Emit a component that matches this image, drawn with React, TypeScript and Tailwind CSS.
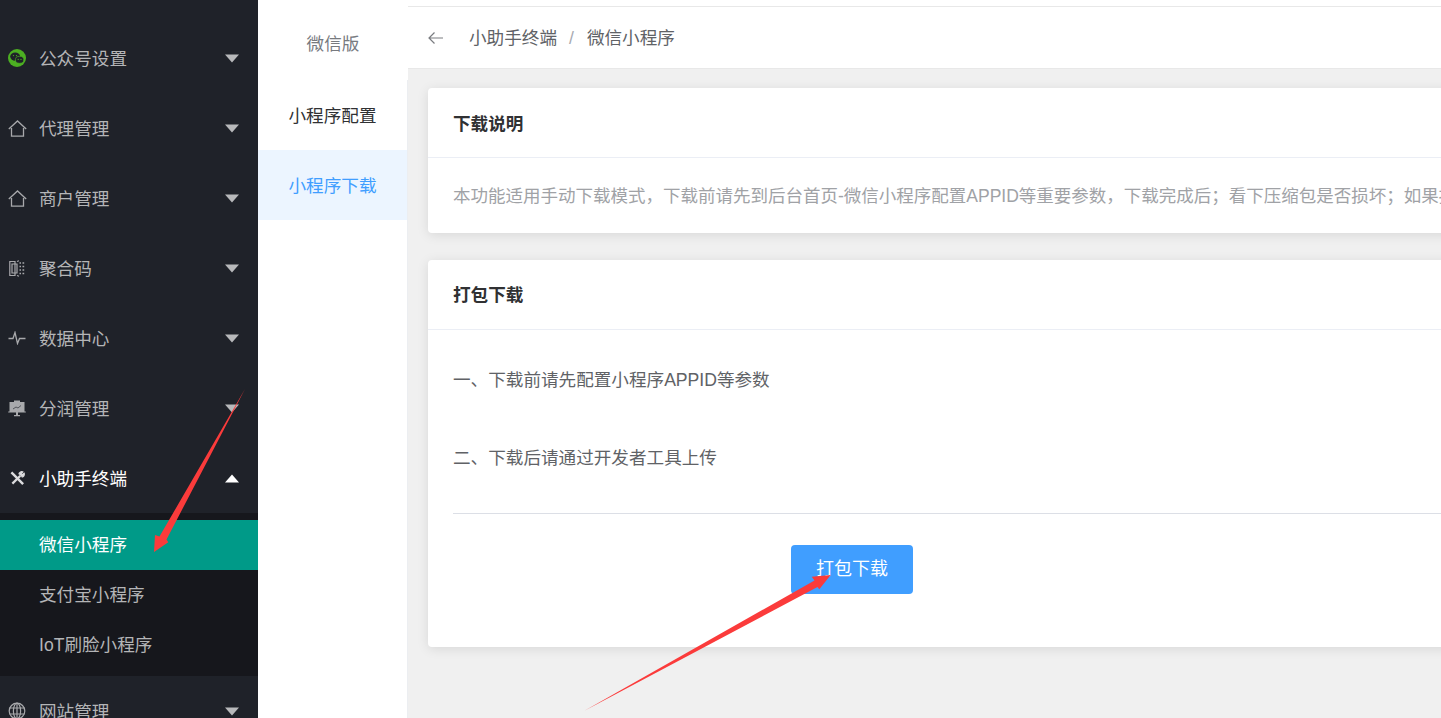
const font = { fontFamily: '"Liberation Sans", "Noto Sans CJK SC", sans-serif' };

function Chevron({ up, light }: { up?: boolean; light?: boolean }) {
  return (
    <svg width="16" height="9" viewBox="0 0 16 9" className="ml-auto mr-[18px]">
      <path d={up ? "M1 8.5 L8 0.5 L15 8.5 Z" : "M1 0.5 L15 0.5 L8 8.5 Z"} fill={light ? "#ffffff" : "#b8b9bb"} />
    </svg>
  );
}

function Icon({ kind }: { kind: string }) {
  const c = "#a8a9ac";
  switch (kind) {
    case "wechat":
      return (
        <svg width="18" height="18" viewBox="0 0 18 18">
          <circle cx="9" cy="9" r="9" fill="#4caf22" />
          <ellipse cx="7.2" cy="7.6" rx="5" ry="4.2" fill="#1f2229" />
          <ellipse cx="11.6" cy="10.8" rx="4.2" ry="3.5" fill="#1f2229" stroke="#4caf22" strokeWidth="0.7" />
          <circle cx="5.5" cy="6.6" r="0.7" fill="#4caf22" />
          <circle cx="8.5" cy="6.6" r="0.7" fill="#4caf22" />
          <circle cx="10.2" cy="10.4" r="0.6" fill="#4caf22" />
          <circle cx="13" cy="10.4" r="0.6" fill="#4caf22" />
        </svg>
      );
    case "home":
      return (
        <svg width="19" height="17" viewBox="0 0 19 17" fill="none" stroke={c} strokeWidth="1.3">
          <path d="M0.8 9 L9.5 1 L18.2 9 M3.5 8 V16.2 H15.5 V8" />
        </svg>
      );
    case "code":
      return (
        <svg width="16" height="17" viewBox="0 0 16 17" fill="none" stroke={c} strokeWidth="1.2">
          <path d="M0.8 1.5 H6 V15.5 H0.8 Z" />
          <path d="M3 4 H8 V13 H3 Z" />
          <path d="M8 1.5 L10 0.8 M8 15.5 L10 16.2" />
          <path d="M10.5 3 H12 M13.5 3 H15.2 M10.5 6.5 H12 M13.5 6.5 H15.2 M10.5 10 H12 M13.5 10 H15.2 M10.5 13.5 H12 M13.5 13.5 H15.2" strokeWidth="1.6" />
        </svg>
      );
    case "pulse":
      return (
        <svg width="18" height="14" viewBox="0 0 18 14" fill="none" stroke={c} strokeWidth="1.3">
          <path d="M0.5 7.5 H5 L7 1.5 L9.5 12.5 L11.5 7.5 H17.5" />
        </svg>
      );
    case "board":
      return (
        <svg width="18" height="17" viewBox="0 0 18 17">
          <path d="M6 0.5 H12 V2 H6 Z M1.5 2 H16.5 V11.5 H17.8 V12.5 H0.2 V11.5 H1.5 Z M8 12.5 H10 V15 H12 V16.2 H6 V15 H8 Z" fill={c} />
          <path d="M5 9 L8 7 L10 8 L13 5.5" stroke="#4a4c52" strokeWidth="0.9" fill="none" />
        </svg>
      );
    case "tools":
      return (
        <svg width="15" height="15" viewBox="0 0 16 16" fill="none" stroke="#dcdcde">
          <path d="M1.5 1.5 L5 5 M5 5 L14 14" strokeWidth="2.6" />
          <path d="M2.5 13.5 L11 5" strokeWidth="2.4" />
          <path d="M9.5 3.5 A3 3 0 0 1 13.5 1 L11.8 3 L13 4.2 L15 2.5 A3 3 0 0 1 12.5 6.5" strokeWidth="1.4" fill="#dcdcde" />
        </svg>
      );
    case "globe":
      return (
        <svg width="18" height="18" viewBox="0 0 18 18" fill="none" stroke={c} strokeWidth="1.2">
          <circle cx="9" cy="9" r="7.8" />
          <ellipse cx="9" cy="9" rx="3.6" ry="7.8" />
          <path d="M9 1 V17 M1.5 6 H16.5 M1.5 12 H16.5" />
        </svg>
      );
    default:
      return null;
  }
}

function NavRow({ icon, label, open }: { icon: string; label: string; open?: boolean }) {
  return (
    <div className={`flex h-[70px] shrink-0 items-center text-[17.6px] ${open ? "text-white" : "text-[#b4b5b7]"}`}>
      <span className="flex w-[39px] shrink-0 items-center justify-center pr-[5px]">
        <Icon kind={icon} />
      </span>
      <span className="pt-[2px]">{label}</span>
      <Chevron up={open} light={open} />
    </div>
  );
}

function Sidebar() {
  return (
    <aside className="flex h-full w-[258px] shrink-0 flex-col overflow-hidden bg-[#1f2229] pt-[23px]">
      <NavRow icon="wechat" label="公众号设置" />
      <NavRow icon="home" label="代理管理" />
      <NavRow icon="home" label="商户管理" />
      <NavRow icon="code" label="聚合码" />
      <NavRow icon="pulse" label="数据中心" />
      <NavRow icon="board" label="分润管理" />
      <NavRow icon="tools" label="小助手终端" open />
      <div className="shrink-0 bg-[#16171c] pb-[6px] pt-[7px] text-[17.6px] text-[#b4b5b7]">
        <div className="flex h-[50px] items-center bg-[#009a88] pl-[39px] text-white">微信小程序</div>
        <div className="flex h-[50px] items-center pl-[39px]">支付宝小程序</div>
        <div className="flex h-[50px] items-center pl-[39px]">IoT刷脸小程序</div>
      </div>
      <NavRow icon="globe" label="网站管理" />
    </aside>
  );
}

function SubNav() {
  return (
    <div className="flex h-full w-[150px] shrink-0 flex-col bg-white text-[17.6px]">
      <div className="flex h-[80px] shrink-0 items-center justify-center pt-[8px] text-[#777a7f]">微信版</div>
      <div className="flex flex-1 flex-col border-r border-[#eceef1]">
        <div className="flex h-[70px] items-center justify-center pt-[2px] text-[#303133]">小程序配置</div>
        <div className="flex h-[70px] items-center justify-center bg-[#ecf5ff] pt-[2px] text-[#409eff]">小程序下载</div>
      </div>
    </div>
  );
}

function Card({ title, className, titleClass, children }: { title: string; className: string; titleClass: string; children: React.ReactNode }) {
  return (
    <section className={`w-[1100px] shrink-0 rounded-[4px] bg-white shadow-[0_2px_12px_0_rgba(0,0,0,0.1)] ${className}`}>
      <div className={`flex h-[70px] items-center border-b border-[#ebeef5] pl-[25px] text-[17.6px] font-bold text-[#303133] ${titleClass}`}>
        {title}
      </div>
      {children}
    </section>
  );
}

function Main() {
  return (
    <main className="flex h-full min-w-0 flex-1 flex-col overflow-hidden bg-[#f0f0f0]">
      <div className="h-[7px] shrink-0 border-b border-[#e8e8e8] bg-white" />
      <div className="flex h-[62px] shrink-0 items-center border-b border-[#e8e8e8] bg-white text-[17.6px] text-[#606266]">
        <svg width="18" height="14" viewBox="0 0 18 14" fill="none" stroke="#7a7c80" strokeWidth="1.2" className="ml-[19px]">
          <path d="M16 7 H2 M7.5 1.5 L2 7 L7.5 12.5" />
        </svg>
        <span className="ml-[24px] pt-[2px]">小助手终端</span>
        <span className="ml-[12px] mr-[13px] pt-[2px] text-[#a8abb2]">/</span>
        <span className="pt-[2px]">微信小程序</span>
      </div>
      <div className="flex flex-col pl-[20px] pt-[19px]">
        <Card title="下载说明" className="h-[145px]" titleClass="pt-[3px]">
          <div className="whitespace-nowrap pl-[25px] pt-[25px] text-[17.5px] leading-[27px] text-[#a0a2a6]">
            本功能适用手动下载模式，下载前请先到后台首页-微信小程序配置APPID等重要参数，下载完成后；看下压缩包是否损坏；如果损坏请重新下载
          </div>
        </Card>
        <Card title="打包下载" className="mt-[27px] h-[387px]" titleClass="pt-[1px]">
          <div className="px-[25px] text-[17.6px] text-[#606266]">
            <p className="mt-[24px] flex h-[39px] items-end leading-[26px]">一、下载前请先配置小程序APPID等参数</p>
            <p className="mt-[39px] flex h-[39px] items-end leading-[26px]">二、下载后请通过开发者工具上传</p>
            <div className="mt-[42px] h-px w-full bg-[#dcdfe6]" />
            <div className="flex pl-[338px] pt-[31px]">
              <button className="h-[49px] w-[122px] rounded-[4px] bg-[#409eff] text-[18px] text-white">打包下载</button>
            </div>
          </div>
        </Card>
      </div>
    </main>
  );
}

export default function App() {
  return (
    <div className="relative flex h-[718px] w-[1441px] overflow-hidden" style={font}>
      <Sidebar />
      <SubNav />
      <Main />
      <svg width="1441" height="718" viewBox="0 0 1441 718" className="pointer-events-none absolute left-0 top-0">
        <path d="M245 389 L166.5 539.5 L168.3 542.3 L154 552 L155 535 L159.5 536.5 Z" fill="#fb3b3b" />
        <path d="M584 711 L814.5 580.5 L811.7 576.7 L830.7 575 L819.3 589.3 L817.5 587 Z" fill="#fb3b3b" />
      </svg>
    </div>
  );
}
